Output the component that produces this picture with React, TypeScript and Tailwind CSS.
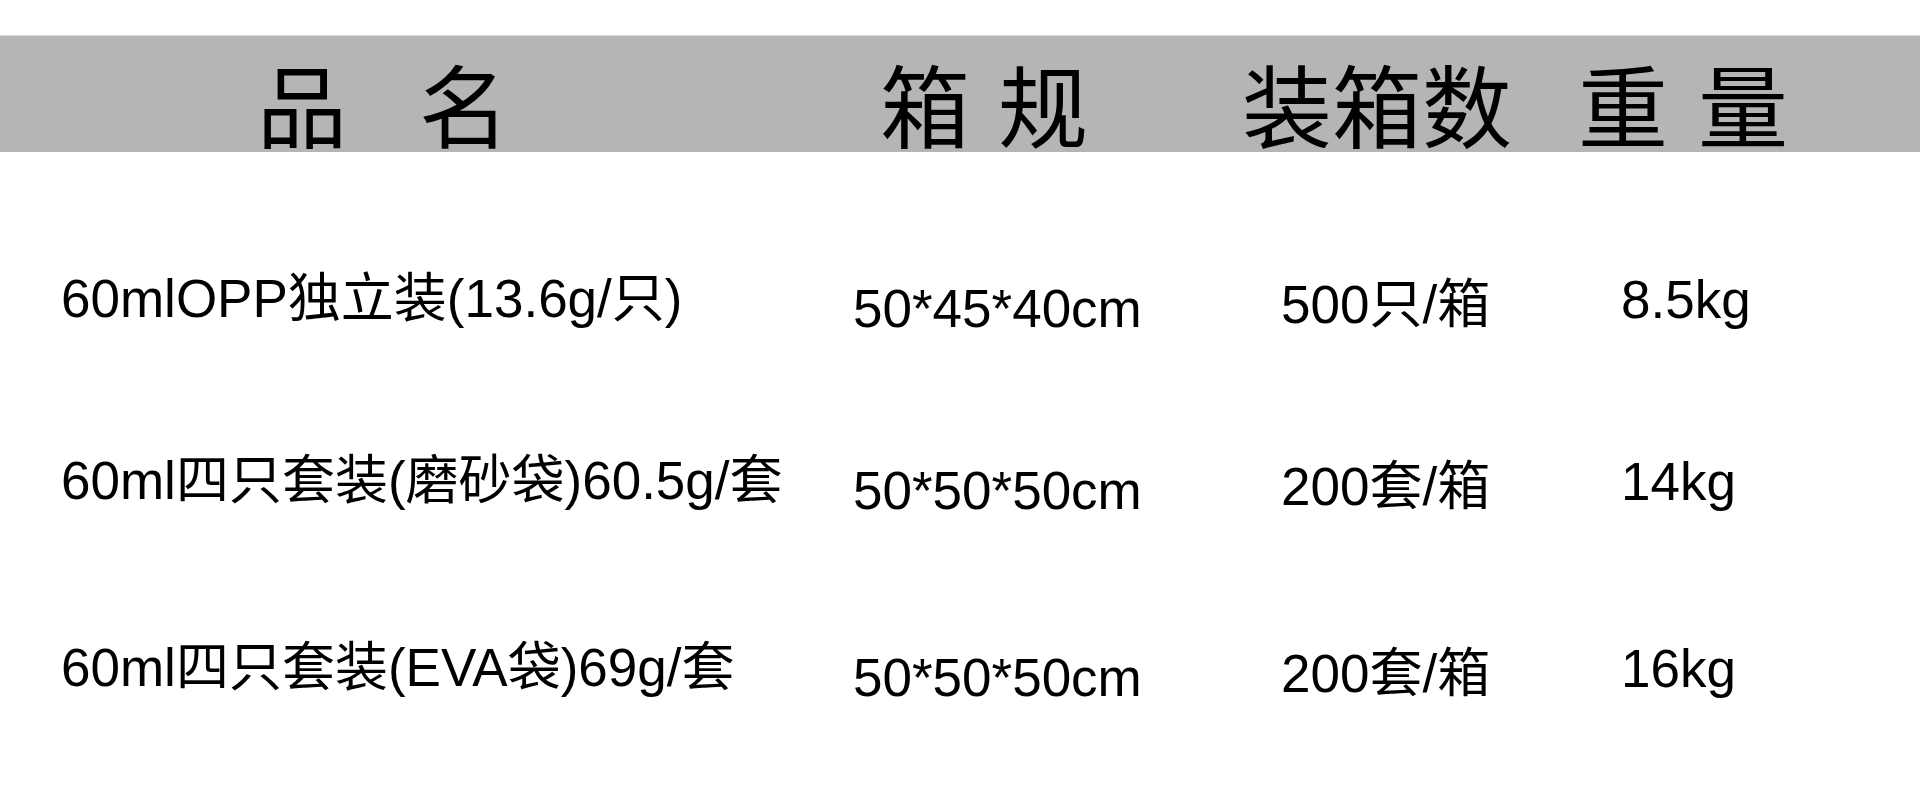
const rows = [
  {
    name: '60mlOPP独立装(13.6g/只)',
    size: '50*45*40cm',
    count: '500只/箱',
    weight: '8.5kg',
    rowClass: 'pt-[120px]',
  },
  {
    name: '60ml四只套装(磨砂袋)60.5g/套',
    size: '50*50*50cm',
    count: '200套/箱',
    weight: '14kg',
    rowClass: 'pt-[119px]',
  },
  {
    name: '60ml四只套装(EVA袋)69g/套',
    size: '50*50*50cm',
    count: '200套/箱',
    weight: '16kg',
    rowClass: 'pt-[124px]',
  },
];

const font = { fontFamily: '"Liberation Sans", "Noto Sans CJK SC", sans-serif' };

export default function App() {
  return (
    <div className="w-[1920px] h-[787px] bg-white text-black overflow-hidden" style={font}>
      <div className="h-[35px]" />

      {/* header bar */}
      <div className="h-[117px] bg-[#b5b5b5] border-t border-[#d9d9d9] flex items-end text-[90px] leading-[84px] font-normal">
        <div className="flex items-end pl-[257px] w-[880px] gap-[72px]">
          <span>品</span>
          <span>名</span>
        </div>
        <div className="w-[362px] tracking-[28px]">箱规</div>
        <div className="w-[336px]">装箱数</div>
        <div className="tracking-[30px]">重量</div>
      </div>

      {/* rows */}
      <div className="flex flex-col">
        {rows.map((r, i) => (
          <div key={i} className={`${r.rowClass} flex items-start text-[53px] leading-none`}>
            <div className="w-[853px] pl-[61px] whitespace-nowrap">{r.name}</div>
            <div className="w-[428px] pt-[10px] whitespace-nowrap">{r.size}</div>
            <div className="w-[340px] pt-[6px] whitespace-nowrap">{r.count}</div>
            <div className="pt-[1px] whitespace-nowrap">{r.weight}</div>
          </div>
        ))}
      </div>
    </div>
  );
}
